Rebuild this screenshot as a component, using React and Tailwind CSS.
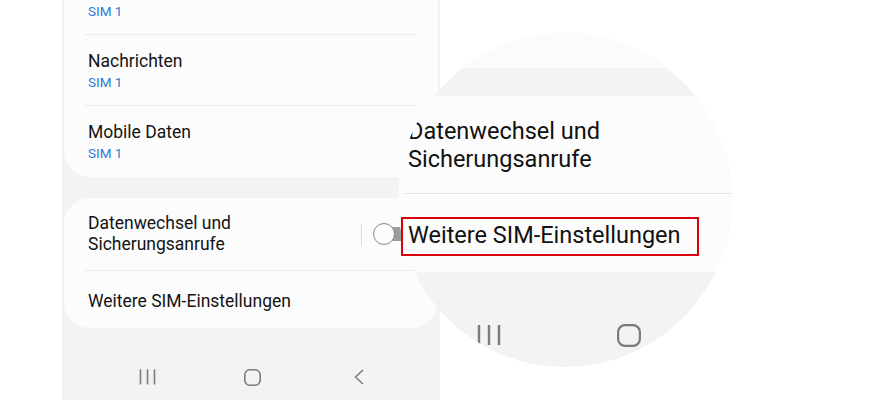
import React from 'react';

function RecentsIcon({ big }) {
  if (big) {
    return (
      <svg width="24" height="22" viewBox="0 0 24 22" fill="none" stroke="#7b7b7b" strokeWidth="2.4">
        <path d="M2 1v20M12 1v20M22 1v20" />
      </svg>
    );
  }
  return (
    <svg width="17" height="16" viewBox="0 0 17 16" fill="none" stroke="#7b7b7b" strokeWidth="1.6">
      <path d="M1.5 0.5v15M8.5 0.5v15M15.5 0.5v15" />
    </svg>
  );
}

function HomeIcon({ big }) {
  if (big) {
    return (
      <svg width="24" height="23" viewBox="0 0 24 23" fill="none" stroke="#7b7b7b" strokeWidth="2.2">
        <rect x="1.1" y="1.1" width="21.8" height="20.8" rx="7" />
      </svg>
    );
  }
  return (
    <svg width="17" height="17" viewBox="0 0 17 17" fill="none" stroke="#7b7b7b" strokeWidth="1.6">
      <rect x="0.8" y="0.8" width="15.4" height="15.4" rx="5" />
    </svg>
  );
}

function BackIcon() {
  return (
    <svg width="10" height="16" viewBox="0 0 10 16" fill="none" stroke="#7b7b7b" strokeWidth="1.5">
      <path d="M9 1 1.5 8 9 15" />
    </svg>
  );
}

function SimItem({ title, divider }) {
  return (
    <div className={`h-[71px] pl-1 pt-4 ${divider ? 'border-b border-[#ebebeb]' : ''}`}>
      <p className="text-[17.5px] leading-5 text-[#141414]">{title}</p>
      <p className="mt-[3px] text-[13.5px] leading-4 text-[#2a7bd6]">SIM 1</p>
    </div>
  );
}

function Toggle() {
  return (
    <div className="relative mr-[7px] h-[22px] w-[38px]">
      <div className="absolute inset-y-[4px] left-[8px] right-0 rounded-full bg-[#9c9c9c]" />
      <div className="absolute left-0 top-0 h-[22px] w-[22px] rounded-full border-[1.5px] border-[#8a8a8a] bg-[#fcfcfc]" />
    </div>
  );
}

function Phone() {
  return (
    <div className="ml-[62px] flex h-[400px] w-[378px] flex-col bg-[#f3f3f3]">
      {/* SIM list */}
      <div className="mx-[2px] rounded-b-[26px] bg-[#fcfcfc] px-5">
        <div className="h-[35px] border-b border-[#ebebeb] pl-1 pt-[3px]">
          <p className="text-[13.5px] leading-4 text-[#2a7bd6]">SIM 1</p>
        </div>
        <SimItem title="Nachrichten" divider />
        <SimItem title="Mobile Daten" />
      </div>

      {/* Data switch card */}
      <div className="mx-[2px] mt-[21px] rounded-[26px] bg-[#fcfcfc] px-5">
        <div className="flex h-[73px] items-center border-b border-[#ebebeb]">
          <div className="flex-1 pl-1 text-[17.5px] leading-[21px] text-[#141414]">
            <p>Datenwechsel und</p>
            <p>Sicherungsanrufe</p>
          </div>
          <div className="mr-[11px] h-[23px] w-px bg-[#dcdcdc]" />
          <Toggle />
        </div>
        <div className="flex h-[57px] items-center pl-1 pt-[3px] text-[17.5px] leading-5 text-[#141414]">
          Weitere SIM-Einstellungen
        </div>
      </div>

      {/* Navigation bar */}
      <div className="flex flex-1 items-center pl-[77px] pt-[26px]">
        <RecentsIcon />
        <div className="ml-[88px]">
          <HomeIcon />
        </div>
        <div className="ml-[93px]">
          <BackIcon />
        </div>
      </div>
    </div>
  );
}

function Magnifier() {
  return (
    <div className="absolute left-[398px] top-[33px] flex h-[334px] w-[334px] flex-col overflow-hidden rounded-full bg-[#f3f3f3]">
      <div className="h-[35px] shrink-0 bg-[#fbfbfb]" />
      <div className="h-[28px] shrink-0" />
      <div className="shrink-0 bg-[#fcfcfc] pl-[6px]">
        <div className="flex h-[98px] items-center border-b border-[#e6e6e6] pl-[4px]">
          <div className="text-[23.5px] leading-[28px] text-[#111]">
            <p className="whitespace-nowrap">Datenwechsel und</p>
            <p className="whitespace-nowrap">Sicherungsanrufe</p>
          </div>
        </div>
        <div className="flex h-[78px] items-center whitespace-nowrap pl-[4px] pt-[3px] text-[23.5px] leading-[28px] text-[#111]">
          Weitere SIM-Einstellungen
        </div>
      </div>
      <div className="flex flex-1 items-center pl-[79px] pt-[31px]">
        <RecentsIcon big />
        <div className="ml-[116px]">
          <HomeIcon big />
        </div>
      </div>
    </div>
  );
}

export default function App() {
  return (
    <div className="relative h-[400px] w-[879px] overflow-hidden bg-white font-['Roboto',sans-serif]">
      <Phone />
      <Magnifier />
      {/* Highlight */}
      <div className="absolute left-[401px] top-[217px] h-[39px] w-[298px] border-2 border-[#d8000c]" />
    </div>
  );
}
